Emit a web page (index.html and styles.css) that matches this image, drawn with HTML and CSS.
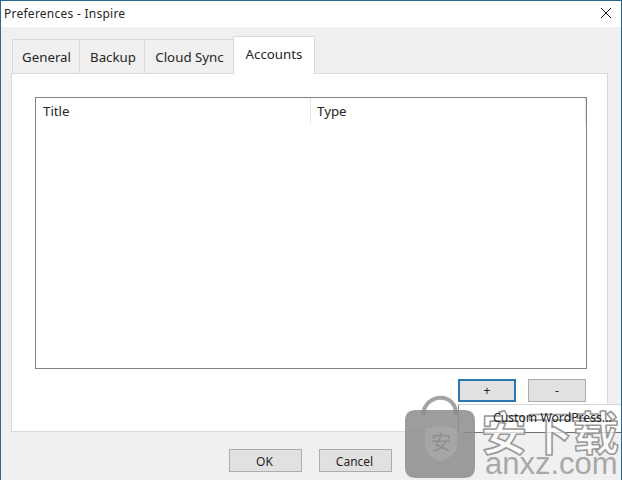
FILE: index.html
```html
<!DOCTYPE html>
<html lang="en">
<head>
<meta charset="utf-8">
<title>Preferences - Inspire</title>
<link rel="stylesheet" href="styles.css">
</head>
<body>
<div class="window">
  <header class="titlebar">
    <span class="title">Preferences - Inspire</span>
    <svg class="close" width="12" height="12" viewBox="0 0 12 12"><path d="M1 1 11 11M11 1 1 11" stroke="#1a1a1a" stroke-width="1" fill="none"/></svg>
  </header>
  <main class="client">
    <nav class="tabs">
      <div class="tab tab-general">General</div>
      <div class="tab tab-backup">Backup</div>
      <div class="tab tab-cloud">Cloud Sync</div>
      <div class="tab tab-active">Accounts</div>
    </nav>
    <section class="panel">
      <div class="list">
        <div class="list-head">
          <div class="col col-title">Title</div>
          <div class="col col-type">Type</div>
        </div>
      </div>
      <div class="list-actions">
        <button class="btn btn-small btn-focus">+</button>
        <button class="btn btn-small">-</button>
      </div>
    </section>
    <footer class="footer">
      <button class="btn btn-main">OK</button>
      <button class="btn btn-main">Cancel</button>
    </footer>
  </main>
  <div class="menu"><span class="menu-item">Custom WordPress...</span></div>
  <svg class="watermark" width="222" height="90" viewBox="0 0 222 90">
    <path class="wm-handle" d="M23 24C25 1 57 1 56 24"/>
    <path class="wm-bag" d="M16 19H64Q75 19 75 30V76Q75 87 64 87H16Q5 87 5 76V30Q5 19 16 19Z"/>
    <path class="wm-shield" d="M25 38Q41 32 57 38V56Q56 64 41 71Q26 64 25 56Z"/>
    <text class="wm-shield-text" x="41" y="59">安</text>
    <text class="wm-cn" x="81" y="59">安下载</text>
    <text class="wm-url" x="85" y="83">anxz.com</text>
  </svg>
</div>
</body>
</html>
```
FILE: styles.css
```css
* { box-sizing: border-box; }
html, body { margin: 0; padding: 0; }
body {
  width: 622px;
  height: 480px;
  overflow: hidden;
  font-family: "Noto Sans", "Open Sans", sans-serif;
  color: #262626;
}
.window {
  position: relative;
  width: 622px;
  height: 480px;
  display: flex;
  flex-direction: column;
  border: 1px solid #2a6a90;
  border-bottom: 0;
  background: #f0f0f0;
  overflow: hidden;
}
.titlebar {
  height: 26px;
  flex: none;
  background: #fff;
  display: flex;
  align-items: center;
  justify-content: space-between;
  padding: 0 9px 2px 3px;
}
.title { font-size: 12px; letter-spacing: 0.25px; }
.client {
  flex: 1;
  display: flex;
  flex-direction: column;
  padding: 10px 12px 0 10px;
}
.tabs {
  display: flex;
  align-items: flex-end;
  height: 37px;
  padding-left: 1px;
  position: relative;
  z-index: 1;
  margin-bottom: -1px;
}
.tab {
  height: 35px;
  font-size: 13.3px;
  display: flex;
  align-items: center;
  justify-content: center;
  border: 1px solid #d9d9d9;
  border-right: 0;
  background: #f0f0f0;
}
.tab-general { width: 67px; padding-left: 1px; }
.tab-backup { width: 65px; padding-left: 2px; }
.tab-cloud { width: 89px; padding-left: 1px; }
.tab-active {
  width: 82px;
  height: 38px;
  background: #fff;
  border-right: 1px solid #d9d9d9;
  border-bottom: 0;
  padding: 0 0 3px;
}
.panel {
  width: 597px;
  height: 359px;
  flex: none;
  background: #fff;
  border: 1px solid #d9d9d9;
  padding: 23px 20px 0 23px;
}
.list {
  height: 272px;
  border: 1px solid #828282;
}
.list-head {
  display: flex;
  height: 26px;
  font-size: 13.3px;
}
.col { display: flex; align-items: center; padding-left: 7px; border-right: 1px solid #e5e5e5; }
.col-title { width: 275px; }
.col-type { width: 275px; padding-left: 6px; }
.list-actions {
  display: flex;
  justify-content: flex-end;
  gap: 12px;
  margin: 10px 1px 0 0;
}
.btn {
  font-family: inherit;
  color: #262626;
  background: #e1e1e1;
  border: 1px solid #adadad;
  padding: 0;
  height: 23px;
  font-size: 12px;
}
.btn-small { width: 58px; }
.btn-focus { border: 2px solid #2a76ad; }
.footer {
  display: flex;
  gap: 17px;
  padding: 17px 0 0 218px;
}
.btn-main { width: 73px; padding: 2px 2px 0 0; }
.menu {
  position: absolute;
  left: 457px;
  top: 403px;
  width: 165px;
  height: 28px;
  background: #fff;
  border-top: 1px solid #d4d4d4;
  border-left: 1px solid #8f8f8f;
  box-shadow: 5px 1px 0 #6f6f6f;
  font-size: 12.2px;
  line-height: 26px;
  padding-left: 34px;
  white-space: nowrap;
}
.menu-item { position: relative; z-index: 3; color: #222; }
.watermark {
  position: absolute;
  left: 399px;
  top: 390px;
  z-index: 2;
  overflow: visible;
  pointer-events: none;
}
.wm-handle { fill: none; stroke: #9a9a9a; stroke-width: 4; opacity: 0.9; }
.wm-bag { fill: #8c8c8c; opacity: 0.85; }
.wm-shield { fill: #a6a6a6; }
.wm-shield-text {
  font-family: "Noto Sans CJK SC", sans-serif;
  font-size: 20px;
  text-anchor: middle;
  fill: #8f8f8f;
}
.wm-cn {
  font-family: "Noto Sans CJK SC", sans-serif;
  font-size: 46px;
  font-weight: 700;
  fill: rgba(255, 255, 255, 0.75);
  stroke: #9a9a9a;
  stroke-width: 1.6px;
  stroke-linejoin: round;
}
.wm-url {
  font-family: "Liberation Sans", sans-serif;
  font-size: 31px;
  fill: #a8a8a8;
}
```
